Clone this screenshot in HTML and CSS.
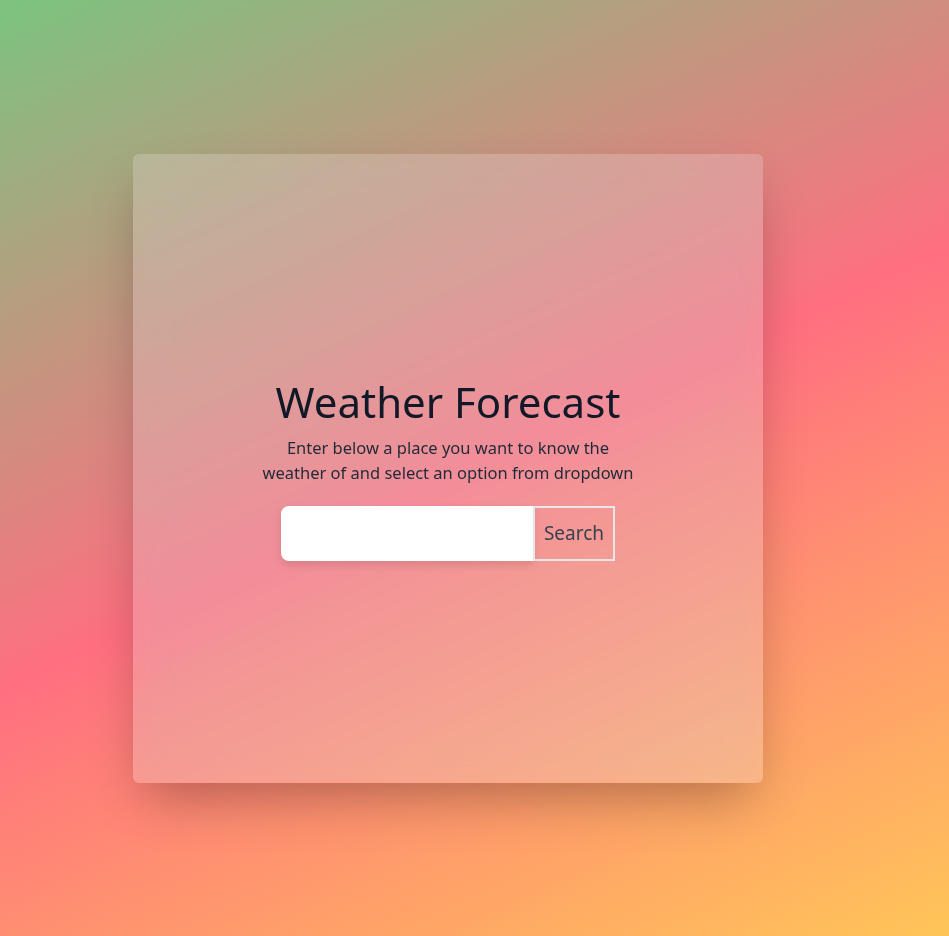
FILE: index.html
```html
<!DOCTYPE html>
<html lang="en">
<head>
<meta charset="utf-8">
<title>Weather Forecast</title>
<link rel="stylesheet" href="styles.css">
</head>
<body>
<main class="page">
  <section class="card">
    <h1 class="title">Weather Forecast</h1>
    <p class="subtitle">Enter below a place you want to know the<br>weather of and select an option from dropdown</p>
    <form class="search">
      <input class="search-input" type="text" aria-label="Place">
      <button class="search-btn" type="button">Search</button>
    </form>
  </section>
</main>
</body>
</html>
```
FILE: styles.css
```css
* { box-sizing: border-box; }
html, body { margin: 0; height: 100%; }
body {
  font-family: "Noto Sans", "Open Sans", sans-serif;
  background: linear-gradient(155deg, #7bc47f 0%, #ff6f80 50%, #ffc558 100%);
  overflow: hidden;
}
.page {
  height: 100%;
  display: flex;
  align-items: center;
  padding-left: 133px;
}
.card {
  width: 630px;
  height: 629px;
  border-radius: 6px;
  background: rgba(240, 236, 236, 0.22);
  backdrop-filter: blur(16px) saturate(0.9);
  box-shadow: 0 25px 50px -12px rgba(0, 0, 0, 0.3);
  display: flex;
  flex-direction: column;
  align-items: center;
  justify-content: center;
  text-align: center;
  padding-top: 2px;
}
.title {
  margin: 0;
  font-size: 42px;
  font-weight: 400;
  line-height: 48px;
  color: #111827;
}
.subtitle {
  margin: 9px 0 0;
  font-size: 16.5px;
  line-height: 25px;
  color: #1f2937;
}
.search {
  margin-top: 21px;
  display: flex;
}
.search-input {
  width: 252px;
  height: 55px;
  border: none;
  border-radius: 8px 0 0 8px;
  background: #fff;
  box-shadow: 0 4px 10px rgba(0, 0, 0, 0.12);
  outline: none;
  font: inherit;
}
.search-btn {
  height: 55px;
  width: 82px;
  border: 2px solid #e5e7eb;
  background: transparent;
  font-family: inherit;
  font-size: 19px;
  color: #374151;
  padding: 0;
}
```
